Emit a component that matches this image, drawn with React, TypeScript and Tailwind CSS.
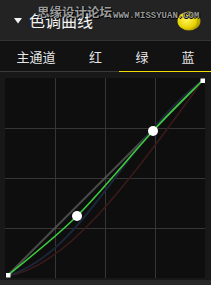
const cjk = { fontFamily: '"Noto Sans CJK SC", "Noto Sans", sans-serif' };

const tabs = [
  { label: '主通道', width: 'w-[72px]' },
  { label: '红', width: 'w-[47px]' },
  { label: '绿', width: 'w-[46px]' },
  { label: '蓝', width: 'flex-1' },
];

function Header() {
  return (
    <div className="relative flex h-[40px] items-center bg-[#232323] pl-[14px]">
      <svg width="8" height="6" viewBox="0 0 8 6" className="mr-[7px] mt-[1px]">
        <path d="M0 0h8L4 5.5z" fill="#f2f2f2" />
      </svg>
      <span className="text-[16px] leading-none text-[#f4f4f4]" style={cjk}>
        色调曲线
      </span>

      {/* watermark overlay */}
      <span
        className="absolute left-[37px] top-[6px] text-[12.5px] font-bold leading-none text-[#9c9c9c] [text-shadow:0_0_1px_#000,1px_1px_0_#000]"
        style={cjk}
      >
        思缘设计论坛
      </span>
      <svg
        width="24"
        height="20"
        viewBox="0 0 24 20"
        className="absolute left-[177px] top-[11px]"
      >
        <defs>
          <radialGradient id="blob" cx="40%" cy="45%" r="60%">
            <stop offset="0%" stopColor="#fff45a" />
            <stop offset="70%" stopColor="#e6d200" />
            <stop offset="100%" stopColor="#a89400" />
          </radialGradient>
        </defs>
        <ellipse cx="12" cy="10" rx="11.5" ry="9.5" fill="url(#blob)" />
        <path d="M16 2.5a8 8 0 0 1 0 15a9 9 0 0 0 0-15z" fill="#b8a400" opacity="0.7" />
      </svg>
      <span className="absolute left-[113px] top-[12px] font-['Liberation_Mono',monospace] text-[9px] font-bold leading-none tracking-[0px] text-[#9a9a9a] [text-shadow:0_0_1px_#000,1px_0_0_#000,0_1px_0_#000]">
        WWW.MISSYUAN.COM
      </span>
    </div>
  );
}

function Tabs() {
  return (
    <div className="flex h-[32px] flex-col border-t border-[#333] bg-[#121212]">
      <div className="flex flex-1 items-center">
        {tabs.map(t => (
          <div
            key={t.label}
            className={`${t.width} pt-[1px] text-center text-[13px] leading-none text-[#e6e6e6]`}
            style={cjk}
          >
            {t.label}
          </div>
        ))}
      </div>
      <div className="flex h-px">
        <div className="w-[119px] bg-[#3a3a3a]" />
        <div className="flex-1 bg-[#f0dc00]" />
      </div>
    </div>
  );
}

function CurveGraph() {
  const grid = [50, 100, 150];
  return (
    <svg width="200" height="200" viewBox="0 0 200 200" className="block bg-[#0e0e0e]">
      {grid.map(v => (
        <g key={v}>
          <line x1={v + 0.5} y1="0" x2={v + 0.5} y2="200" stroke="#363636" />
          <line x1="0" y1={v + 0.5} x2="200" y2={v + 0.5} stroke="#363636" />
        </g>
      ))}
      <line x1="2" y1="198" x2="198" y2="2" stroke="#5a5a5a" strokeWidth="2" opacity="0.8" />
      <path d="M2 198C60 190 120 110 198 2" fill="none" stroke="#3a1a1a" strokeWidth="1.5" />
      <path d="M2 198C80 175 120 60 198 2" fill="none" stroke="#1c2638" strokeWidth="2" />
      <path
        d="M2 198C13.7 188 47.7 162.2 72 138C96.3 113.8 127 75.7 148 53C169 30.3 189.7 10.5 198 2"
        fill="none"
        stroke="#3ccb3c"
        strokeWidth="1.6"
      />
      <circle cx="72" cy="138" r="5" fill="#fff" />
      <circle cx="148" cy="53" r="5" fill="#fff" />
      <rect x="1" y="195" width="4.5" height="4.5" fill="#fff" />
      <rect x="195.5" y="0.5" width="4.5" height="4.5" fill="#fff" />
    </svg>
  );
}

export default function App() {
  return (
    <div className="flex h-[285px] w-[211px] flex-col overflow-hidden bg-[#181818]">
      <Header />
      <Tabs />
      <div className="flex-1 pl-[5px] pt-[6px]">
        <CurveGraph />
      </div>
      <div className="h-[5px] bg-[#272727]" />
    </div>
  );
}
